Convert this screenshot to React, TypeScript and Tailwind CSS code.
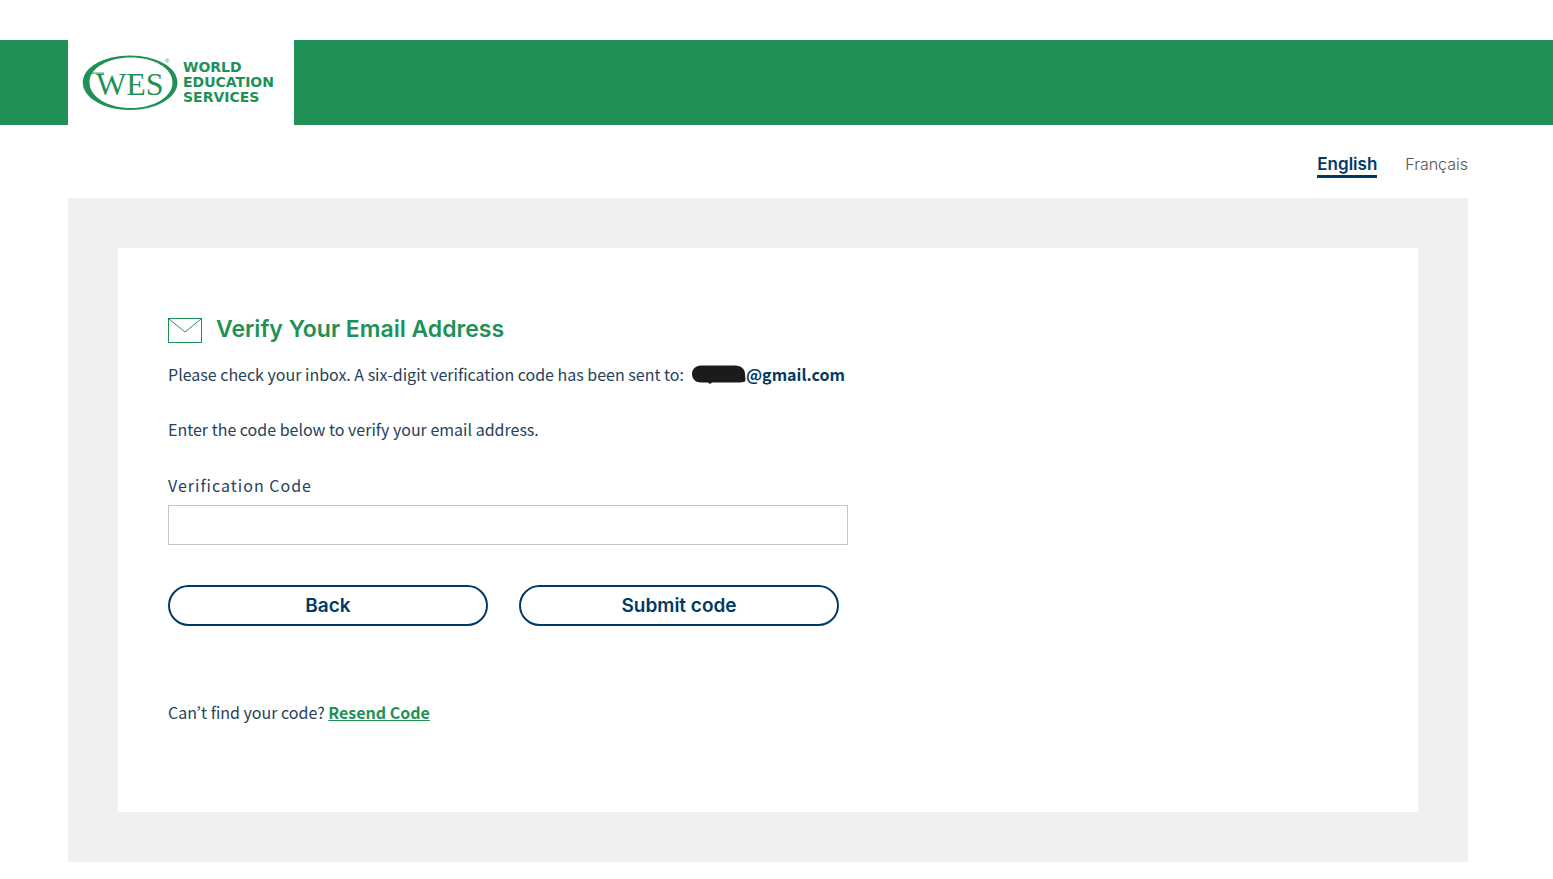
import { useState } from "react";

function Logo() {
  return (
    <a
      href="#home"
      aria-label="World Education Services"
      className="flex h-full w-[226px] items-center bg-white pl-[14px] text-[#1f9156]"
    >
      <svg width="98" height="60" viewBox="0 0 98 60" aria-hidden="true" className="shrink-0">
        <path
          fillRule="evenodd"
          fill="currentColor"
          d="M48 2.500C74 2.500 95.500 14 95.500 29.500S74 57 48 57 .8 45 .8 29.500 22 2.500 48 2.500ZM49 4.500C27 4.500 7.500 14.500 7.500 29.500S27 55 49 55 90.500 44.500 90.500 29.500 71 4.500 49 4.500Z"
        />
        <path fill="currentColor" d="M8 19.600H22V20.600H8Z" />
        <text x="14" y="42" fontSize="32" fill="currentColor" fontFamily="Liberation Serif, serif">
          WES
        </text>
        <text x="83" y="10" fontSize="6" fill="currentColor" fontFamily="Liberation Sans, sans-serif">
          ®
        </text>
      </svg>
      <span className="ml-[3px] font-['DejaVu_Sans',sans-serif] text-[14px] leading-[15px] font-bold">
        WORLD
        <br />
        EDUCATION
        <br />
        SERVICES
      </span>
    </a>
  );
}

function EnvelopeIcon() {
  return (
    <svg width="34" height="25" viewBox="0 0 34 25" fill="none" stroke="#1f9156" aria-hidden="true">
      <rect x="0.5" y="0.5" width="33" height="24" />
      <path d="M1 1 17 14 33 1" />
    </svg>
  );
}

const pill =
  "h-[41px] w-[320px] rounded-full border-2 border-[#003a63] bg-white font-['Inter',sans-serif] text-[19px] font-semibold text-[#003a63]";

export default function App() {
  const [code, setCode] = useState("");

  return (
    <div className="min-h-screen bg-white pt-10 pb-4 font-['Noto_Sans_CJK_KR',sans-serif] text-[16px] leading-[28px] text-[#26425a]">
      <header className="h-[85px] bg-[#1f9156] pl-[68px]">
        <Logo />
      </header>

      <div className="pr-[85px] pl-[68px]">
        <nav
          aria-label="Language"
          className="flex h-[73px] items-start justify-end gap-7 pt-[29px] font-['Inter',sans-serif] text-[16px] leading-[21px]"
        >
          <a href="#en" aria-current="true" className="border-b-3 border-[#003a63] text-[17px] font-semibold text-[#003a63]">
            English
          </a>
          <a href="#fr" className="font-light text-[#555555]">
            Français
          </a>
        </nav>

        <main className="bg-[#efefef] p-[50px]">
          <form
            onSubmit={(event) => event.preventDefault()}
            className="bg-white px-[50px] pt-[65px] pb-[86px]"
          >
            <div className="flex h-[32px] items-start gap-[14px]">
              <span className="pt-[5px]">
                <EnvelopeIcon />
              </span>
              <h1 className="font-['Inter',sans-serif] text-[23px] leading-[32px] font-semibold text-[#1f9156]">
                Verify Your Email Address
              </h1>
            </div>

            <p className="mt-[15px] flex items-center">
              <span>Please check your inbox. A six-digit verification code has been sent to:</span>
              <svg width="54" height="20" viewBox="0 0 54 20" role="img" aria-label="Hidden name" className="ml-2">
                <path
                  fill="#1b1b1b"
                  d="M9 1.500H43C49 1.500 53 5 53 10 53 13 54 15 53 17.500 51 18.500 49 18.300 46 18.500H20L18 20 16 18.500H9C4 18.500 0 15 0 10S4 1.500 9 1.500Z"
                />
              </svg>
              <strong className="font-bold text-[#003a63]">@gmail.com</strong>
            </p>
            <p className="mt-[27px]">Enter the code below to verify your email address.</p>

            <label htmlFor="code" className="mt-[28px] block tracking-[1px]">
              Verification Code
            </label>
            <input
              id="code"
              type="text"
              inputMode="numeric"
              value={code}
              onChange={(event) => setCode(event.target.value)}
              className="mt-[6px] block h-[40px] w-full max-w-[680px] border border-[#c4c4c4] bg-white px-3"
            />

            <div className="mt-[40px] flex flex-wrap gap-[31px]">
              <button type="button" className={pill}>
                Back
              </button>
              <button type="submit" className={pill}>
                Submit code
              </button>
            </div>

            <p className="mt-[72px]">
              Can’t find your code?{" "}
              <a href="#resend" className="font-bold text-[#1f9156] underline">
                Resend Code
              </a>
            </p>
          </form>
        </main>
      </div>
    </div>
  );
}
